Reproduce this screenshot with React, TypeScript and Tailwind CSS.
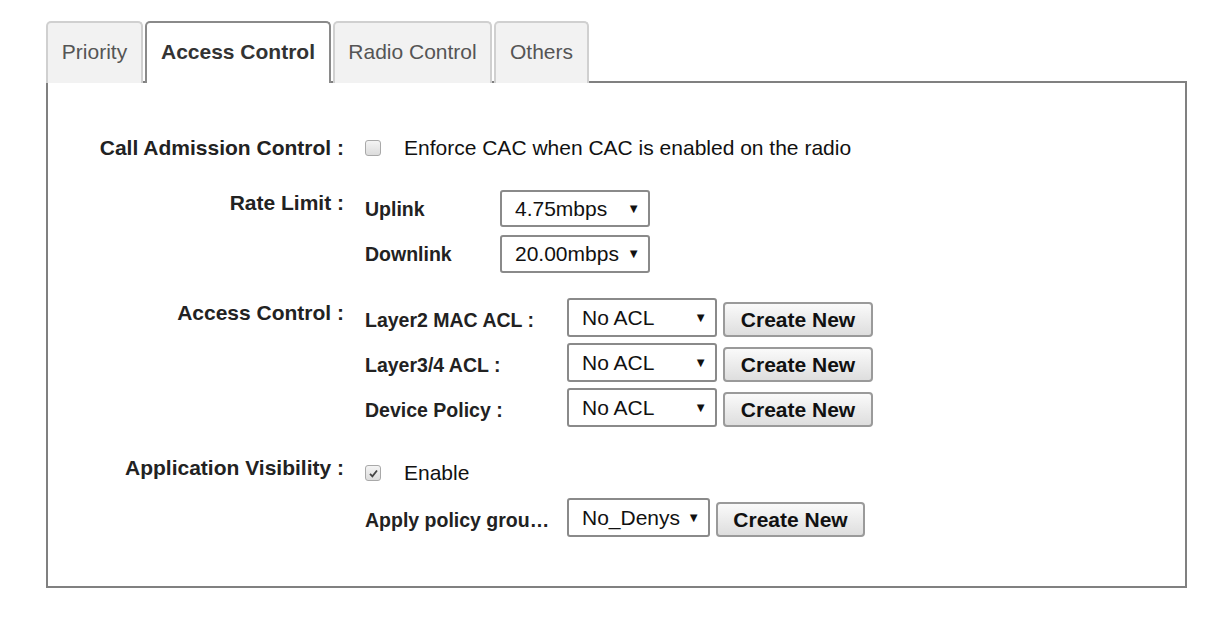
import React from "react";

const font = { fontFamily: '"Liberation Sans", Arial, sans-serif' };

function Checkbox({ checked }: { checked?: boolean }) {
  return (
    <span className="inline-flex h-[16px] w-[16px] items-center justify-center rounded-[3px] border border-[#a9a9a9] bg-gradient-to-b from-[#f4f4f4] to-[#dcdcdc]">
      {checked && (
        <svg width="11" height="11" viewBox="0 0 11 11">
          <path d="M2 5.8 L4.4 8.3 L9 2.5" fill="none" stroke="#444" strokeWidth="1.8" />
        </svg>
      )}
    </span>
  );
}

function Select({ value, w, h }: { value: string; w: string; h: string }) {
  return (
    <div
      className={`flex ${w} ${h} items-center justify-between rounded-[3px] border-2 border-[#8a8a8a] bg-white pl-[13px] pr-[8px] text-[21px] leading-[24px] text-[#111]`}
    >
      <span>{value}</span>
      <span className="text-[13px]">▼</span>
    </div>
  );
}

function Button({ w }: { w: string }) {
  return (
    <div
      className={`flex ${w} h-[35px] items-center justify-center rounded-[4px] border-2 border-[#9a9a9a] bg-gradient-to-b from-[#fafafa] to-[#dedede] text-[21px] font-bold leading-[24px] text-[#111]`}
    >
      Create New
    </div>
  );
}

export default function App() {
  const tabs = [
    { label: "Priority", w: "w-[97px]" },
    { label: "Access Control", w: "w-[186px]", active: true },
    { label: "Radio Control", w: "w-[159px]" },
    { label: "Others", w: "w-[95px]" },
  ];
  return (
    <div className="min-h-[618px] bg-white pl-[46px] pt-[21px]" style={font}>
      <div className="relative z-10 mb-[-2px] flex h-[62px] items-stretch gap-[2px]">
        {tabs.map((t) =>
          t.active ? (
            <div
              key={t.label}
              className={`${t.w} flex items-center justify-center rounded-t-[5px] border-2 border-b-0 border-[#8a8a8a] bg-white pb-[2px] text-[21px] font-bold text-[#333]`}
            >
              {t.label}
            </div>
          ) : (
            <div
              key={t.label}
              className={`${t.w} flex items-center justify-center rounded-t-[5px] border-2 border-b-0 border-[#d0d0d0] bg-[#f2f2f2] pb-[2px] text-[21px] text-[#555]`}
            >
              {t.label}
            </div>
          )
        )}
      </div>
      <div className="flex h-[507px] w-[1141px] flex-col border-2 border-[#808080] pt-[53px] text-[21px] leading-[24px] text-[#222]">
        {/* CAC */}
        <div className="flex h-[24px] items-center">
          <div className="w-[296px] text-right font-bold">Call Admission Control :</div>
          <div className="ml-[21px] flex items-center">
            <Checkbox />
            <span className="ml-[23px] text-[#111]">Enforce CAC when CAC is enabled on the radio</span>
          </div>
        </div>

        {/* Rate Limit */}
        <div className="mt-[30px] flex">
          <div className="w-[296px] pt-[1px] text-right font-bold">Rate Limit :</div>
          <div className="ml-[21px] flex flex-col gap-[8px]">
            <div className="flex items-center">
              <div className="w-[135px] text-[19.5px] font-bold">Uplink</div>
              <Select value="4.75mbps" w="w-[150px]" h="h-[37px]" />
            </div>
            <div className="flex items-center">
              <div className="w-[135px] text-[19.5px] font-bold">Downlink</div>
              <Select value="20.00mbps" w="w-[150px]" h="h-[38px]" />
            </div>
          </div>
        </div>

        {/* Access Control */}
        <div className="mt-[25px] flex">
          <div className="w-[296px] pt-[3px] text-right font-bold">Access Control :</div>
          <div className="ml-[21px] flex flex-col gap-[6px]">
            {["Layer2 MAC ACL :", "Layer3/4 ACL :", "Device Policy :"].map((l) => (
              <div key={l} className="flex items-end">
                <div className="w-[202px] pb-[5px] text-[19.5px] font-bold">{l}</div>
                <Select value="No ACL" w="w-[150px]" h="h-[39px]" />
                <div className="ml-[6px]">
                  <Button w="w-[150px]" />
                </div>
              </div>
            ))}
          </div>
        </div>

        {/* App Visibility */}
        <div className="mt-[29px] flex">
          <div className="w-[296px] text-right font-bold">Application Visibility :</div>
          <div className="ml-[21px] flex flex-col">
            <div className="mt-[5px] flex h-[24px] items-center">
              <Checkbox checked />
              <span className="ml-[23px] text-[#111]">Enable</span>
            </div>
            <div className="mt-[13px] flex items-end">
              <div className="w-[202px] pb-[5px] text-[19.5px] font-bold">Apply policy grou…</div>
              <Select value="No_Denys" w="w-[143px]" h="h-[39px]" />
              <div className="ml-[6px]">
                <Button w="w-[149px]" />
              </div>
            </div>
          </div>
        </div>
      </div>
    </div>
  );
}
